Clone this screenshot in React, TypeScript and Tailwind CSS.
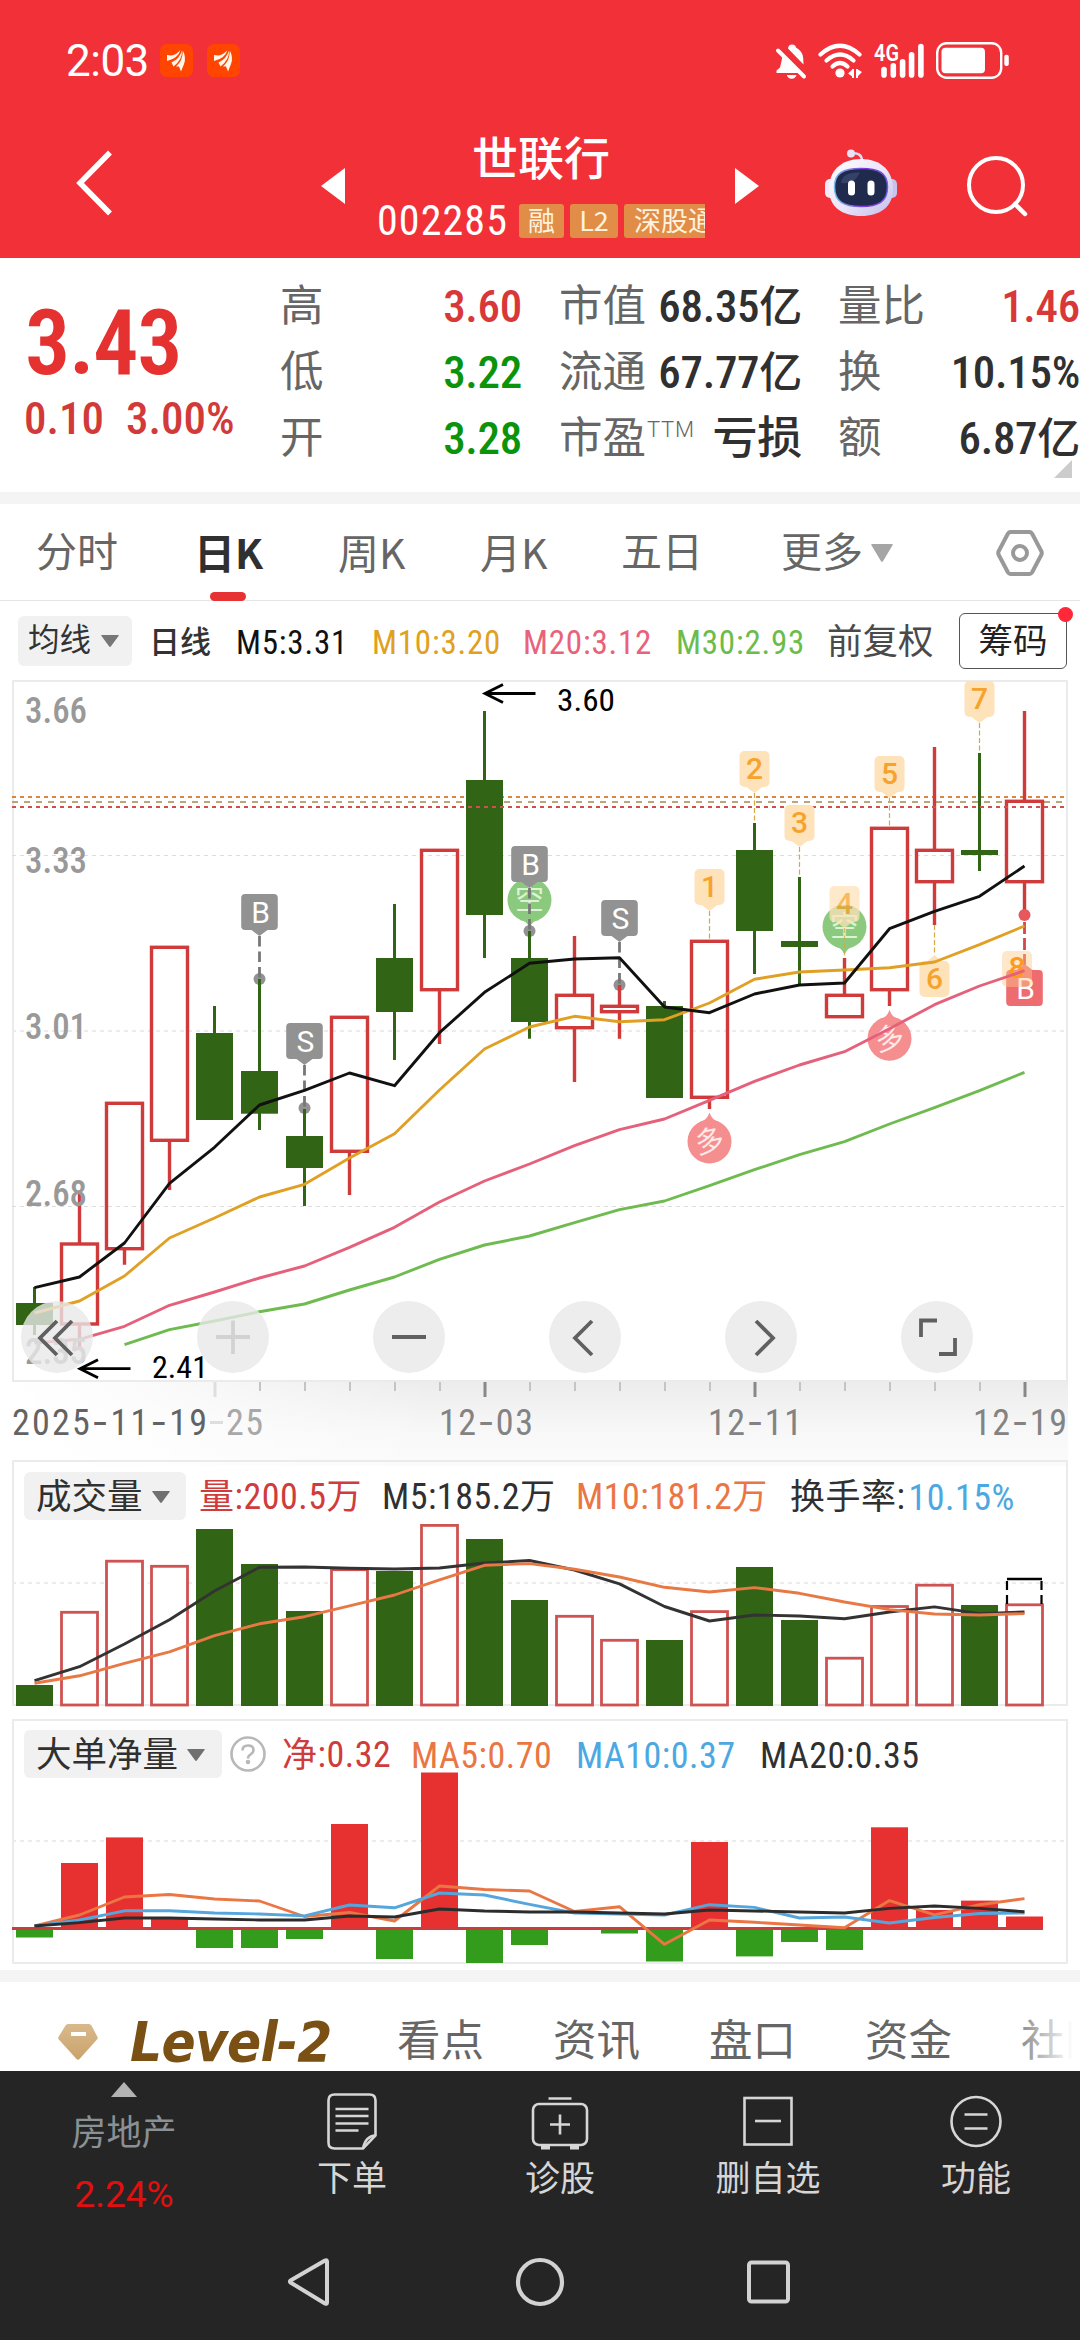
import clsx from "clsx";
import type { ReactNode } from "react";

type Candle = {
    up: boolean;
    open: number;
    close: number;
    high: number;
    low: number;
};

const STEP = 45;
const FIRST_X = 34.5;
const cx = (i: number) => FIRST_X + i * STEP;
const toPoints = (ys: number[], from = 0) => ys.map((y, i) => `${cx(i + from)},${y}`).join(" ");

// [rising, wick top, body top, body bottom, wick bottom]
const candles: Candle[] = (
    [
        [0, 1287, 1303, 1325, 1335],
        [1, 1190.7, 1244, 1324, 1347.7],
        [1, 1103, 1103.3, 1248.7, 1264.7],
        [1, 947, 947.3, 1140.3, 1190],
        [0, 1006, 1033, 1120, 1120],
        [0, 979, 1071, 1113.7, 1130],
        [0, 1109, 1136, 1168, 1206],
        [1, 1017, 1017.3, 1151.3, 1195],
        [0, 904, 958, 1012, 1060],
        [1, 850, 850.3, 989.7, 1044],
        [0, 711, 780, 915, 958],
        [0, 931, 958, 1022, 1038.7],
        [1, 936, 995.3, 1027.7, 1082],
        [1, 985, 1006.3, 1011.7, 1038.7],
        [0, 1001, 1006, 1098, 1098],
        [1, 941, 941.3, 1097.3, 1109],
        [0, 823, 850, 931, 974],
        [0, 877, 941, 947, 984],
        [1, 958, 995.3, 1016.7, 1016.7],
        [1, 828, 828.3, 989.7, 1006],
        [1, 747, 850.3, 881.7, 925],
        [0, 753, 850, 855, 871],
        [1, 711, 801.3, 881.7, 915],
    ] as number[][]
).map(([up, high, open, close, low]) => ({ up: up === 1, high, open, close, low }));

const ma5 = [1287.7, 1277, 1243, 1183.3, 1147.3, 1105, 1090.3, 1073, 1085.7, 1032.7, 992.3, 963.3, 959, 957.7, 1007, 1012.7, 994, 985, 983, 928.7, 911.3, 896.3, 866];
const ma10 = [1313, 1301, 1276, 1238, 1218, 1197, 1184.3, 1158, 1133.7, 1090, 1049, 1027, 1016.3, 1021.7, 1019.7, 1003, 979.3, 972, 970, 967.7, 962, 944.7, 926];
const ma20 = [1343, 1339.3, 1326.3, 1305.3, 1292, 1278, 1266, 1247.3, 1227.3, 1202, 1181, 1164, 1145.7, 1129.7, 1119, 1100.3, 1081.3, 1065, 1051.7, 1028.7, 1004.7, 986, 970.7];
const ma30 = [1344.7, 1329.7, 1321, 1311.7, 1304, 1290, 1277, 1259.3, 1245, 1236, 1222.7, 1209.7, 1201, 1185.7, 1169.7, 1154.7, 1141.7, 1124, 1107.7, 1090.7, 1072.3];

const volumes = [1685, 1612.3, 1561.2, 1566.3, 1529, 1564, 1611, 1569.7, 1571, 1525.4, 1539, 1600, 1616.3, 1640.3, 1640, 1611.6, 1567, 1620, 1658.2, 1606.5, 1585.2, 1605, 1604.8];
const volM5 = [1680.6, 1666.7, 1644, 1619.7, 1591, 1567.3, 1567, 1568.3, 1569, 1568, 1563, 1560.5, 1570, 1583.9, 1606.5, 1621, 1615, 1616, 1618.7, 1612, 1606.9, 1613.6, 1612];
const volM10 = [1683.3, 1675.8, 1663.3, 1651.8, 1635.6, 1623.8, 1616.7, 1605.8, 1595, 1579.8, 1565.3, 1563.6, 1569.3, 1577, 1587.3, 1592, 1587.6, 1593.3, 1602, 1609.6, 1614, 1615, 1613.6];

const NET_ZERO = 1928.5;
const netBars = [1937.5, 1863, 1837.4, 1919, 1948, 1948, 1939, 1824, 1959, 1772.5, 1963, 1945, NET_ZERO, 1933.5, 1961.5, 1842, 1956.4, 1942, 1950, 1827.3, 1910, 1900.6, 1916.5];
const netM5 = [1926, 1915, 1897, 1894.5, 1899, 1901, 1916.5, 1912.5, 1921, 1886, 1889.5, 1891, 1911.5, 1906.7, 1944.3, 1920, 1922.3, 1925, 1927.7, 1900.6, 1914.8, 1904.7, 1898.6];
const netM10 = [1926, 1920, 1910.8, 1910.8, 1913, 1914, 1915.9, 1905, 1907.8, 1893, 1895, 1904.4, 1913, 1914, 1915, 1904.7, 1907.4, 1918, 1917, 1923, 1917.5, 1913.5, 1913];
const netM20 = [1926, 1922.6, 1918, 1918, 1919, 1920, 1920, 1916, 1917, 1909, 1911, 1912, 1912, 1913, 1914, 1910, 1911, 1912, 1913, 1908.4, 1906, 1908.4, 1911.8];

function StatusBar() {
    return (
        <div className="flex h-[120px] items-start pt-[41px] text-white">
            <span className="ml-[66px] w-[94px] font-[Roboto] text-[44px] leading-[40px] tracking-[-0.5px]">2:03</span>
            <AppBadge />
            <div className="w-[14px]" />
            <AppBadge />
            <svg className="ml-[535px] h-10 w-[236px]" viewBox="775 40 236 40" fill="currentColor">
                {/* Muted bell */}
                <path d="M788 47.5Q788.5 43.5 792 43.5Q795.500 43.500 796 46.500Q802.500 50 803.200 57L803.500 63.500Z" />
                <path d="M782.500 54L800 72H776.500V69.500L780 66.500Q781.800 60 782.500 54ZM786.800 74H796.500Q795.500 77.700 791.700 77.700Q787.800 77.700 786.800 74Z" />
                <path d="M778 49.500L804 75.500" stroke="currentColor" strokeWidth="4" strokeLinecap="round" />
                {/* Wi-Fi */}
                <g fill="none" stroke="currentColor" strokeWidth="4.200" strokeLinecap="round">
                    <path d="M820.500 53.500Q840 36 859.500 53.500" />
                    <path d="M826.500 59.500Q840 47.500 853.500 59.500" />
                    <path d="M832.500 65.500Q840 58.500 847.500 65.500" />
                </g>
                <circle cx="840" cy="72" r="4.600" />
                <path d="M853 68V76L848 72.500ZM857 68V76L862 71Z" />
                <rect x="852" y="68" width="2" height="9" />
                <rect x="856" y="68" width="2" height="9" />
                {/* Signal */}
                <text x="874" y="60" className="font-[Roboto] text-[23px] font-semibold" textLength="25" lengthAdjust="spacingAndGlyphs">4G</text>
                <rect x="881.200" y="65.700" width="5.600" height="11" rx="2.800" />
                <rect x="890.500" y="62" width="5.600" height="14.700" rx="2.800" />
                <rect x="899.800" y="58" width="5.600" height="18.700" rx="2.800" />
                <rect x="908.800" y="51" width="5.600" height="25.700" rx="2.800" />
                <rect x="918.100" y="42.700" width="5.600" height="34" rx="2.800" />
                {/* Battery */}
                <rect x="937.200" y="42.200" width="64" height="34.600" rx="9.500" fill="none" stroke="currentColor" strokeWidth="2.400" />
                <rect x="941.500" y="46.700" width="43.500" height="25.500" rx="4" />
                <rect x="1004.300" y="53.700" width="4.500" height="11.300" rx="2" />
            </svg>
        </div>
    );
}

function AppBadge() {
    return (
        <svg className="mt-[3px] h-[33px] w-[33px]" viewBox="0 0 33 33">
            <rect width="33" height="33" rx="7" fill="#ff4500" />
            <g fill="#fff7ea">
                <path d="M7 11L11 11.500Q16 11 20.500 6Q18 14.500 7 17Z" />
                <path d="M11.500 18.500Q19.500 15 22 6.500Q22.500 15.500 13.500 22.500Z" />
                <path d="M16 22.500Q23 16.500 22.800 6.500Q26.500 13.500 24 20L21 27.500L19 22.500Z" />
            </g>
        </svg>
    );
}

function RobotIcon() {
    return (
        <svg className="h-[68px] w-[74px]" viewBox="0 0 74 68">
            <defs>
                <linearGradient id="shell" x1="0" y1="0" x2="1" y2="1">
                    <stop offset="0" stopColor="#ffffff" />
                    <stop offset="0.55" stopColor="#e9e4f7" />
                    <stop offset="1" stopColor="#c3bcec" />
                </linearGradient>
                <linearGradient id="rim" x1="0" y1="0" x2="1" y2="0">
                    <stop offset="0" stopColor="#79b8e8" />
                    <stop offset="0.6" stopColor="#7a35d8" />
                    <stop offset="1" stopColor="#6d5be0" />
                </linearGradient>
            </defs>
            <path d="M27 4.500Q38 3 38 12" fill="none" stroke="#dfdaf2" strokeWidth="2.500" />
            <circle cx="27" cy="4.500" r="4" fill="#e8e2f5" />
            <rect x="1" y="30" width="10" height="19" rx="5" fill="#eeeafa" />
            <rect x="63" y="30" width="10" height="19" rx="5" fill="#c9c2ee" />
            <path d="M37 10C57 10 69 22 69 40C69 58 56 67 37 67C18 67 5 58 5 40C5 22 17 10 37 10Z" fill="url(#shell)" />
            <path d="M37 19.500C55 19.500 63.500 24 63.500 38C63.500 53 54 57.500 37 57.500C20 57.500 10.500 53 10.500 38C10.500 24 19 19.500 37 19.500Z" fill="#1f2a4d" stroke="url(#rim)" strokeWidth="1.500" />
            <path d="M17 34C18 26 24 23.500 36 23.500C32 32 26 35 17 34Z" fill="#46527a" opacity="0.6" />
            <rect x="24" y="31.500" width="7" height="15" rx="3.500" fill="#fff" />
            <rect x="43.500" y="31.500" width="7" height="15" rx="3.500" fill="#fff" />
        </svg>
    );
}

function StockHeader() {
    return (
        <div className="flex h-[132px] items-center text-white">
            <svg className="-mt-1.5 ml-[76px] h-[70px] w-[38px] shrink-0" viewBox="0 0 38 70" fill="none" stroke="currentColor" strokeWidth="5.500">
                <path d="M34 4.500L4 35L34 65.500" />
            </svg>
            <svg className="ml-[207px] h-9 w-6 shrink-0" viewBox="0 0 24 36" fill="currentColor">
                <path d="M0 18L24 0V36Z" />
            </svg>
            <div className="ml-8 flex w-[328px] shrink-0 flex-col gap-5">
                <div className="text-center text-[46px] leading-[50px] font-medium">世联行</div>
                <div className="flex h-[34px] items-center gap-1.5 overflow-hidden whitespace-nowrap">
                    <span className="mr-[7px] w-[129px] text-[42px] leading-[34px] font-[450] tracking-[1.1px]">002285</span>
                    <Tag className="w-[45px]">融</Tag>
                    <Tag className="w-[48px]">L2</Tag>
                    <Tag className="pl-2.5">深股通</Tag>
                </div>
            </div>
            <svg className="ml-[30px] h-9 w-6 shrink-0" viewBox="0 0 24 36" fill="currentColor">
                <path d="M24 18L0 0V36Z" />
            </svg>
            <div className="-mt-1.5 ml-[65px]">
                <RobotIcon />
            </div>
            <svg className="ml-[67px] h-16 w-16 shrink-0" viewBox="0 0 64 64" fill="none" stroke="currentColor" strokeWidth="4">
                <circle cx="31" cy="31" r="27" />
                <path d="M50 50L60 60" strokeWidth="4.500" strokeLinecap="round" />
            </svg>
        </div>
    );
}

function Tag({ children, className }: { children: ReactNode; className?: string }) {
    return (
        <span className={clsx("flex h-[34px] shrink-0 items-center justify-center rounded-[3px] bg-[#e18d48] pb-[3px] font-[Noto_Sans_CJK_SC] text-[27px] leading-[31px] text-[#fff3df]", className)}>
            {children}
        </span>
    );
}

function Stat({ label, sup, value, tone }: { label: string; sup?: string; value: string; tone?: "up" | "down" }) {
    return (
        <div className="flex h-[66px] items-center justify-between text-[43.5px] leading-[66px] whitespace-nowrap">
            <span className="flex text-[#666]">
                {label}
                {sup && <span className="ml-px font-[Roboto] text-[22px] leading-[48px] font-light tracking-[0.8px]">{sup}</span>}
            </span>
            <span
                className={clsx(
                    "text-[45px] font-medium tracking-[-0.3px]",
                    tone === "up" && "text-[#d83838]",
                    tone === "down" && "text-[#0b940b]",
                    !tone && "text-[#303030]",
                )}
            >
                {value.replace("亿", "")}
                {value.endsWith("亿") && <span className="text-[43px]">亿</span>}
            </span>
        </div>
    );
}

function Quote() {
    return (
        <section className="relative flex h-[234px] pt-4">
            <div className="w-[280px] text-[#e63131]">
                <div className="mt-[27px] ml-[25px] text-[90px] leading-[86px] font-semibold tracking-[-1.3px]">3.43</div>
                <div className="mt-[4px] ml-6 flex gap-[22px] text-[45px] leading-[56px] font-medium text-[#d23a3a]">
                    <span>0.10</span>
                    <span>3.00%</span>
                </div>
            </div>
            <div className="w-[242px]">
                <Stat label="高" value="3.60" tone="up" />
                <Stat label="低" value="3.22" tone="down" />
                <Stat label="开" value="3.28" tone="down" />
            </div>
            <div className="ml-[37px] w-[243px]">
                <Stat label="市值" value="68.35亿" />
                <Stat label="流通" value="67.77亿" />
                <Stat label="市盈" sup="TTM" value="亏损" />
            </div>
            <div className="ml-[36px] w-[242px]">
                <Stat label="量比" value="1.46" tone="up" />
                <Stat label="换" value="10.15%" />
                <Stat label="额" value="6.87亿" />
            </div>
            <svg className="absolute top-[202px] right-2 h-[18px] w-[18px]" viewBox="0 0 18 18" fill="#ccc">
                <path d="M18 0V18H0Z" />
            </svg>
        </section>
    );
}

function Caret({ className }: { className?: string }) {
    return (
        <svg className={clsx("shrink-0", className)} viewBox="0 0 18 12" preserveAspectRatio="none" fill="currentColor">
            <path d="M0.500 0H17.500Q18 0.500 17.500 1L9.800 11.500Q9 12.300 8.200 11.500L0.500 1Q0 0.500 0.500 0Z" />
        </svg>
    );
}

function PeriodTabs() {
    return (
        <nav className="flex h-[97px] items-center border-b border-[#e5e5e5] pt-0.5 text-[41px] leading-[60px] text-[#666]">
            <span className="ml-[36px] w-[158px] shrink-0">分时</span>
            <span className="relative -mt-[5px] w-[144px] shrink-0 font-[Noto_Sans_CJK_SC] font-bold text-[#303030]">
                日K
                <i className="absolute top-[71px] left-4 h-[9px] w-9 rounded-full bg-[#e63232]" />
            </span>
            <span className="-mt-[5px] w-[142px] shrink-0 font-[Noto_Sans_CJK_SC]">周K</span>
            <span className="-mt-[5px] w-[141px] shrink-0 font-[Noto_Sans_CJK_SC]">月K</span>
            <span className="w-[160px] shrink-0">五日</span>
            <span className="flex w-[215px] shrink-0 items-center">
                更多
                <Caret className="ml-2 h-[18px] w-[22px] text-[#a5a5a5]" />
            </span>
            <svg className="h-12 w-12 shrink-0" viewBox="0 0 48 48" fill="none" stroke="#999" strokeWidth="4" strokeLinejoin="round">
                <path d="M14.500 3H33.500Q35 3 36 4.500L45.500 22.500Q46 24 45.500 25.500L36 43.500Q35 45 33.500 45H14.500Q13 45 12 43.500L2.500 25.500Q2 24 2.500 22.500L12 4.500Q13 3 14.500 3Z" />
                <circle cx="24" cy="24" r="7" />
            </svg>
        </nav>
    );
}

function MaLegend() {
    return (
        <div className="flex h-[79px] items-center text-[33px] leading-[46px] font-[450] tracking-[0.8px] whitespace-nowrap">
            <span className="ml-[18px] flex h-[50px] w-[114px] shrink-0 items-center rounded-md bg-[#f1f1f1] pl-2.5 text-[31.5px] font-normal tracking-normal text-[#333]">
                均线
                <Caret className="ml-2.5 h-3 w-[18px] text-[#777]" />
            </span>
            <span className="ml-[17px] w-[87px] shrink-0 pt-[5px] text-[31px] tracking-normal text-[#333]">日线</span>
            <span className="w-[136px] shrink-0 pt-1 text-[#111]">M5:3.31</span>
            <span className="w-[151px] shrink-0 pt-1 text-[#e0a020]">M10:3.20</span>
            <span className="w-[153px] shrink-0 pt-1 text-[#e8637a]">M20:3.12</span>
            <span className="w-[151px] shrink-0 pt-1 text-[#6cbc4c]">M30:2.93</span>
            <span className="w-[132px] shrink-0 pt-[3px] text-[35.5px] font-normal tracking-normal text-[#4a4a4a]">前复权</span>
            <span className="relative flex h-[56px] w-[108px] shrink-0 items-center justify-center rounded-[6px] border border-[#555] text-[34.5px] font-normal tracking-normal text-[#222]">
                筹码
                <i className="absolute -top-[7px] -right-[7px] h-[15px] w-[15px] rounded-full bg-[#ff2838]" />
            </span>
        </div>
    );
}

function GridLine({ y, thin }: { y: number; thin?: boolean }) {
    return <line x1="12" x2="1066" y1={y} y2={y} stroke={thin ? "#dcdcdc" : "#ececec"} strokeWidth={thin ? 1 : 2} strokeDasharray="4 4" />;
}

function TradeFlag({ i, y, dotY, letter }: { i: number; y: number; dotY: number; letter: string }) {
    const x = cx(i);
    return (
        <g>
            <line x1={x} x2={x} y1={y + 42} y2={dotY} stroke="#777" strokeWidth="2.800" strokeDasharray="10.500 5" />
            <rect x={x - 18.3} y={y} width="36.600" height="36" rx="4" fill="#929292" />
            <path d={`M${x - 8} ${y + 36}h16l-8 6z`} fill="#929292" />
            <text x={x + 1} y={y + 29} textAnchor="middle" fill="#fff" className="font-[Roboto] text-[30px]">{letter}</text>
        </g>
    );
}

function CountFlag({ i, y, toY, n, below, shift = 0 }: { i: number; y: number; toY: number; n: number; below?: boolean; shift?: number }) {
    const x = cx(i) + shift;
    return (
        <g>
            <line x1={cx(i)} x2={cx(i)} y1={below ? toY : y + 42} y2={below ? y - 6 : toY} stroke="#d6a844" strokeWidth="1.200" strokeDasharray="5 2.500" />
            <rect x={x - 15} y={y} width="30" height="36" rx="5" fill="#fee2ba" />
            <path d={below ? `M${x - 7} ${y}h14l-7 -6z` : `M${x - 8} ${y + 36}h16l-8 6z`} fill="#fee2ba" />
            <text x={x} y={y + 27.5} textAnchor="middle" fill="#f5a32c" className="font-[Roboto] text-[30px] font-medium">{n}</text>
        </g>
    );
}

function Balloon({ i, y, kind }: { i: number; y: number; kind: "long" | "short" }) {
    const x = cx(i);
    const long = kind === "long";
    const tip = long ? y - 29 : y + 28;
    const base = long ? y - 20 : y + 20;
    return (
        <g opacity="0.88">
            <circle cx={x} cy={y} r="22" fill={long ? "#f47f7f" : "#7cc26e"} />
            <path d={`M${x - 10} ${base}Q${x - 3} ${base} ${x} ${tip}Q${x + 3} ${base} ${x + 10} ${base}z`} fill={long ? "#f47f7f" : "#7cc26e"} />
            <text
                x={x}
                y={y + 10}
                textAnchor="middle"
                fill={long ? "#ffe6e6" : "#d8f3cf"}
                transform={long ? `rotate(-12 ${x} ${y})` : undefined}
                className="font-[Noto_Sans_CJK_SC] text-[29px]"
            >
                {long ? "多" : "空"}
            </text>
        </g>
    );
}

function PriceLabel({ y, children }: { y: number; children: string }) {
    return (
        <text x="25" y={y} fill="#999" textLength="62" lengthAdjust="spacingAndGlyphs" className="text-[37px] font-medium">
            {children}
        </text>
    );
}

function DateLabel({ x, width, value, color }: { x: number; width: number; value: string; color: string }) {
    return (
        <text x={x} y="1435" fill={color} textLength={width} className="text-[36px] font-[450]">
            {value.split("").map((c, i) => (
                <tspan key={i} className={c === "-" ? "font-[Inter] font-normal" : ""}>{c}</tspan>
            ))}
        </text>
    );
}

const chartButtons: { d: string; faded?: boolean }[] = [
    { d: "M36 20L19 37L36 54M51 20L34 37L51 54" },
    { d: "M19 36H53M36 19.500V53", faded: true },
    { d: "M19 36H53" },
    { d: "M43 20L26 37L43 54" },
    { d: "M31 20L48 37L31 54" },
    { d: "M20 36V19.500H36M38 53H54V37" },
];

function KLineChart() {
    return (
        <section className="relative h-[780px]">
            <svg className="absolute inset-0 h-[790px] w-[1080px]" viewBox="0 680 1080 790">
                <defs>
                    <linearGradient id="axisShade" x1="0" y1="0" x2="0" y2="1">
                        <stop offset="0" stopColor="#ececec" />
                        <stop offset="0.6" stopColor="#f8f8f8" />
                        <stop offset="1" stopColor="#fbfbfb" />
                    </linearGradient>
                    <linearGradient id="leftFade" x1="0" y1="0" x2="1" y2="0">
                        <stop offset="0" stopColor="#fff" />
                        <stop offset="0.25" stopColor="#fff" stopOpacity="0.85" />
                        <stop offset="1" stopColor="#fff" stopOpacity="0" />
                    </linearGradient>
                </defs>
                <rect x="12" y="1382" width="1056" height="84" fill="url(#axisShade)" />
                <rect x="12" y="1382" width="420" height="84" fill="url(#leftFade)" />
                <rect x="13" y="681" width="1054" height="700" fill="#fff" stroke="#ebebeb" strokeWidth="2" />
                <GridLine y={855.5} thin />
                <GridLine y={1031} />
                <GridLine y={1206.5} thin />
                <line x1="12" x2="1066" y1="797" y2="797" stroke="#d9863f" strokeWidth="2" strokeDasharray="4 4" />
                <line x1="12" x2="1066" y1="802" y2="802" stroke="#b8a878" strokeWidth="2" strokeDasharray="6 6" />

                {/* Dots sit under the wicks */}
                <circle cx={cx(5)} cy="979" r="6" fill="#929292" />
                <circle cx={cx(6)} cy="1108" r="6" fill="#929292" />
                <circle cx={cx(11)} cy="931" r="6" fill="#929292" />
                <circle cx={cx(13)} cy="985" r="6" fill="#929292" />

                {candles.map((c, i) => {
                    const x = cx(i);
                    if (!c.up) {
                        return (
                            <g key={i} fill="#316414">
                                <rect x={x - 1.5} y={c.high} width="3" height={c.low - c.high} />
                                <rect x={x - 18.5} y={c.open} width="37" height={c.close - c.open} />
                            </g>
                        );
                    }
                    return (
                        <g key={i} fill="none" stroke="#cf3b3b" strokeWidth="3.400">
                            <path d={`M${x} ${c.high}V${c.open}M${x} ${c.close}V${c.low}`} />
                            <rect x={x - 18} y={c.open} width="36" height={c.close - c.open} />
                        </g>
                    );
                })}
                <line x1="12" x2="1066" y1="807" y2="807" stroke="#cf5050" strokeWidth="2" strokeDasharray="4 4" />

                <Balloon i={11} y={900} kind="short" />
                <Balloon i={15} y={1141.5} kind="long" />
                <Balloon i={19} y={1038.7} kind="long" />

                <CountFlag i={15} y={869} toY={941} n={1} />
                <CountFlag i={16} y={751} toY={823} n={2} />
                <CountFlag i={17} y={805} toY={877} n={3} />
                <Balloon i={18} y={926.7} kind="short" />
                <g opacity="0.75">
                    <CountFlag i={18} y={886} toY={958} n={4} />
                </g>
                <CountFlag i={19} y={756} toY={828} n={5} />
                <CountFlag i={20} y={961} toY={925} n={6} below />
                <CountFlag i={21} y={681} toY={753} n={7} />

                <TradeFlag i={5} y={894} dotY={978} letter="B" />
                <TradeFlag i={6} y={1023} dotY={1107} letter="S" />
                <TradeFlag i={11} y={846} dotY={931} letter="B" />
                <TradeFlag i={13} y={900} dotY={984} letter="S" />

                {/* Latest buy */}
                <circle cx={cx(22)} cy="915" r="6" fill="#e8575c" />
                <line x1={cx(22)} x2={cx(22)} y1="922" y2="966" stroke="#d04848" strokeWidth="2.800" strokeDasharray="12 4" />
                <rect x={cx(22) - 18.3} y="970" width="36.600" height="36" rx="4" fill="#ee6b70" />
                <path d={`M${cx(22) - 8} 970h16l-8 -6z`} fill="#ee6b70" />
                <text x={cx(22) + 1} y="999" textAnchor="middle" fill="#fff" className="font-[Roboto] text-[30px]">B</text>
                <rect x="1002" y="951" width="30" height="36" rx="5" fill="#fdc98a" opacity="0.45" />
                <text x="1017" y="978" textAnchor="middle" fill="#ff9a1e" className="font-[Roboto] text-[30px] font-medium">8</text>

                <g fill="none" strokeWidth="2.900" strokeLinejoin="round">
                    <polyline points={toPoints(ma30, 2)} stroke="#6fbb50" />
                    <polyline points={toPoints(ma20)} stroke="#e5607a" />
                    <polyline points={toPoints(ma10)} stroke="#e0a024" />
                    <polyline points={toPoints(ma5)} stroke="#111" />
                </g>

                <PriceLabel y={723}>3.66</PriceLabel>
                <PriceLabel y={872.7}>3.33</PriceLabel>
                <PriceLabel y={1039}>3.01</PriceLabel>
                <PriceLabel y={1206}>2.68</PriceLabel>
                <PriceLabel y={1363.7}>2.35</PriceLabel>

                <g fill="none" stroke="#000" strokeWidth="2.800">
                    <path d="M535.500 693.500H485M503 684.500L485 693.500L503 702.500" />
                    <path d="M130.500 1368.700H80M98 1359.700L80 1368.700L98 1377.700" />
                </g>
                <text x="557" y="710.700" textLength="58" lengthAdjust="spacingAndGlyphs" className="text-[31px]">3.60</text>
                <text x="152" y="1377.500" textLength="56" lengthAdjust="spacingAndGlyphs" className="text-[31px]">2.41</text>

                {candles.map((_, i) => {
                    if (i < 4) return null;
                    const major = (i - 4) % 6 === 0;
                    return (
                        <line
                            key={i}
                            x1={cx(i) + 0.5}
                            x2={cx(i) + 0.5}
                            y1="1382"
                            y2={major ? 1397 : 1391}
                            stroke={i === 4 ? "#dedede" : major ? "#888" : "#c4c4c4"}
                            strokeWidth={major ? 3 : 2}
                        />
                    );
                })}
                <line x1="210" x2="223" y1="1422.500" y2="1422.500" stroke="#dedede" strokeWidth="3" />
                <DateLabel x={12} width={195} value="2025-11-19" color="#636363" />
                <DateLabel x={226} width={37} value="25" color="#a8a8a8" />
                <DateLabel x={439} width={94} value="12-03" color="#838383" />
                <DateLabel x={708} width={94} value="12-11" color="#838383" />
                <DateLabel x={973} width={94} value="12-19" color="#838383" />
            </svg>

            <div className="absolute top-[621px] left-[21px] flex gap-[104px]">
                {chartButtons.map((b) => (
                    <button key={b.d} type="button" className="h-[72px] w-[72px] rounded-full bg-[#e8e8e8]/80">
                        <svg viewBox="0 0 72 72" fill="none" stroke={b.faded ? "#d2d2d2" : "#606060"} strokeWidth="3.800">
                            <path d={b.d} />
                        </svg>
                    </button>
                ))}
            </div>
        </section>
    );
}

function IndicatorButton({ label, className }: { label: string; className: string }) {
    return (
        <span className={clsx("flex h-12 shrink-0 items-center rounded-md bg-[#f1f1f1] pt-0.5 pl-3 text-[35.5px] tracking-normal text-[#303030]", className)}>
            {label}
            <Caret className="ml-[9px] h-3 w-[18px] text-[#707070]" />
        </span>
    );
}

function Cjk({ children }: { children: string }) {
    return <span className="text-[35px] font-normal">{children}</span>;
}

function VolumePanel() {
    return (
        <section className="relative h-[246px] pt-3">
            <svg className="absolute inset-0 h-[248px] w-[1080px]" viewBox="0 1460 1080 248">
                <rect x="13" y="1461" width="1054" height="244" fill="none" stroke="#ebebeb" strokeWidth="2" />
                <GridLine y={1583} />
                {volumes.map((y, i) =>
                    candles[i].up ? (
                        <rect key={i} x={cx(i) - 18} y={y} width="36" height={1705 - y} fill="#fff" stroke="#cf5353" strokeWidth="2.800" />
                    ) : (
                        <rect key={i} x={cx(i) - 18.5} y={y} width="37" height={1706 - y} fill="#316414" />
                    ),
                )}
                <path d="M1007 1604V1581M1041.500 1604V1581" stroke="#000" strokeWidth="2.200" strokeDasharray="9 5" />
                <path d="M1007 1579H1042" stroke="#000" strokeWidth="2.400" />
                <g fill="none" strokeWidth="2.900" strokeLinejoin="round">
                    <polyline points={toPoints(volM5)} stroke="#333" />
                    <polyline points={toPoints(volM10)} stroke="#e87844" />
                </g>
            </svg>
            <div className="relative flex h-12 items-center pl-6 text-[36px] leading-12 font-[450] tracking-[0.5px] whitespace-nowrap">
                <IndicatorButton label="成交量" className="w-[162px] font-normal" />
                <span className="ml-[13px] w-[183px] shrink-0 pt-[3px] text-[#d03b3b]"><Cjk>量</Cjk>:200.5<Cjk>万</Cjk></span>
                <span className="w-[194px] shrink-0 pt-[3px] text-[#303030]">M5:185.2<Cjk>万</Cjk></span>
                <span className="w-[214px] shrink-0 pt-[3px] text-[#ea7644]">M10:181.2<Cjk>万</Cjk></span>
                <span className="shrink-0 pt-[3px] text-[#303030]"><Cjk>换手率</Cjk>:</span>
                <span className="ml-[3px] pt-[3px] text-[#4ba8e2]">10.15%</span>
            </div>
        </section>
    );
}

function NetFlowPanel() {
    return (
        <section className="relative mt-[13px] mb-1.5 h-[245px] pt-[11px]">
            <svg className="absolute inset-0 h-[245px] w-[1080px]" viewBox="0 1719 1080 245">
                <rect x="13" y="1720" width="1054" height="243" fill="none" stroke="#ebebeb" strokeWidth="2" />
                <GridLine y={1841} />
                {netBars.map((y, i) => {
                    const up = y < NET_ZERO;
                    return (
                        <rect
                            key={i}
                            x={cx(i) - 18.5}
                            y={up ? y : NET_ZERO}
                            width="37"
                            height={Math.abs(NET_ZERO - y)}
                            fill={up ? "#e73131" : "#339c1d"}
                        />
                    );
                })}
                <rect x="12" y="1927" width="1031" height="3" fill="#cb3c3c" />
                <g fill="none" strokeWidth="2.900" strokeLinejoin="round">
                    <polyline points={toPoints(netM5)} stroke="#ea7644" />
                    <polyline points={toPoints(netM10)} stroke="#55a6dc" />
                    <polyline points={toPoints(netM20)} stroke="#2c2c2c" />
                </g>
            </svg>
            <div className="relative flex h-12 items-center pl-6 text-[36px] leading-12 font-[450] tracking-[0.5px] whitespace-nowrap">
                <IndicatorButton label="大单净量" className="w-[198px] font-normal" />
                <svg className="mx-2 h-9 w-9 shrink-0" viewBox="0 0 36 36" fill="none" stroke="#b8b8b8" strokeWidth="2.600">
                    <circle cx="18" cy="18" r="16.500" />
                    <path d="M12.500 14.500Q12.500 9.500 18 9.500Q23.500 9.500 23.500 14Q23.500 16.500 20.500 18.500Q18 20 18 22.500" />
                    <circle cx="18" cy="26" r="1" fill="#b8b8b8" />
                </svg>
                <span className="ml-2 w-[129px] shrink-0 pt-[3px] text-[#d03b3b]"><Cjk>净</Cjk>:0.32</span>
                <span className="w-[165px] shrink-0 pt-[3px] text-[#ea7644]">MA5:0.70</span>
                <span className="w-[184px] shrink-0 pt-[3px] text-[#4ba8e2]">MA10:0.37</span>
                <span className="pt-[3px] text-[#303030]">MA20:0.35</span>
            </div>
        </section>
    );
}

function DetailTabs() {
    return (
        <nav className="relative flex h-[89px] items-center overflow-hidden pt-[31px] text-[43.5px] leading-[56px] whitespace-nowrap text-[#666]">
            <svg className="ml-[58px] h-9 w-10 shrink-0" viewBox="0 0 40 36">
                <defs>
                    <linearGradient id="gem" x1="0" y1="0" x2="0" y2="1">
                        <stop offset="0" stopColor="#d9b98c" />
                        <stop offset="1" stopColor="#c9a36c" />
                    </linearGradient>
                </defs>
                <path d="M7.500 1.500Q8.500 0 10 0H31Q32.500 0 33.500 1.500L39.500 13Q40 14.500 39 15.500L21.500 35Q20 36.500 18.500 35L0.800 15.500Q-0.200 14.500 0.500 13Z" fill="url(#gem)" />
                <rect x="13" y="8" width="15" height="4" fill="#fff" />
            </svg>
            <span className="ml-[32px] w-[267px] shrink-0 font-[DejaVu_Sans_Condensed] text-[56px] font-bold tracking-[-0.7px] text-[#7b5014] italic">Level-2</span>
            <span className="w-[156px] shrink-0">看点</span>
            <span className="w-[156px] shrink-0">资讯</span>
            <span className="w-[156px] shrink-0">盘口</span>
            <span className="w-[156px] shrink-0">资金</span>
            <span className="shrink-0">社区</span>
            <div className="absolute inset-y-0 right-0 w-[70px] bg-linear-to-r from-white/10 to-white to-90%" />
        </nav>
    );
}

function ToolItem({ label, children }: { label: string; children: ReactNode }) {
    return (
        <div className="flex w-[208px] flex-col items-center text-[35px] leading-[50px] text-[#d6d6d6]">
            <svg className="mt-[21px] h-[60px] w-[60px]" viewBox="0 0 60 60" fill="none" stroke="currentColor" strokeWidth="2.600">
                {children}
            </svg>
            <span className="mt-[3px]">{label}</span>
        </div>
    );
}

function BottomBar() {
    return (
        <footer className="h-[269px] bg-[#252525]">
            <div className="flex h-[153px]">
                <div className="flex w-[248px] flex-col items-center">
                    <svg className="mt-[11px] h-[15px] w-[26px]" viewBox="0 0 26 15" fill="#b3b3b3">
                        <path d="M13 0L26 15H0Z" />
                    </svg>
                    <span className="mt-[12px] text-[35px] leading-[50px] text-[#8a9094]">房地产</span>
                    <span className="mt-[11px] font-[Roboto] text-[37px] leading-[50px] text-[#e01010] font-stretch-90%">2.24%</span>
                </div>
                <ToolItem label="下单">
                    <path d="M12.500 2.500H47.500Q53.500 2.500 53.500 8.500V43.500L41 56.500H12.500Q6.500 56.500 6.500 50.500V8.500Q6.500 2.500 12.500 2.500Z" />
                    <path d="M53.500 43.500Q43.500 44 41 56.500M13.500 17H46.500M13.500 24H46.500M13.500 31.500H46.500M13.500 38.500H36.500" />
                </ToolItem>
                <ToolItem label="诊股">
                    <rect x="3" y="12" width="54" height="41" rx="6" />
                    <path d="M18.500 6.500H41.500M20 32.500H40M30 22.500V42.500" />
                    <path d="M11 55.500H20M40 55.500H49" strokeWidth="4" />
                </ToolItem>
                <ToolItem label="删自选">
                    <rect x="6.500" y="6" width="47" height="46.500" />
                    <path d="M17 29H43" />
                </ToolItem>
                <ToolItem label="功能">
                    <circle cx="30" cy="29.500" r="24.500" />
                    <path d="M18.500 22.500H41.500M18.500 36.500H41.500" />
                </ToolItem>
            </div>
            <div className="flex h-[116px] items-center pl-[286px] text-[#d2d2d2]">
                <svg className="h-[50px] w-[45px]" viewBox="0 0 45 50" fill="none" stroke="currentColor" strokeWidth="4" strokeLinejoin="round">
                    <path d="M4.500 25.500Q3.500 24.500 4.500 23.500L39 3.500Q41 2.500 41 4.500V45.500Q41 47.500 39 46.500Z" />
                </svg>
                <svg className="ml-[184px] h-[50px] w-[50px]" viewBox="0 0 50 50" fill="none" stroke="currentColor" strokeWidth="4.200">
                    <circle cx="25" cy="25" r="22" />
                </svg>
                <svg className="ml-[181px] h-[46px] w-[46px]" viewBox="0 0 46 46" fill="none" stroke="currentColor" strokeWidth="4">
                    <rect x="3" y="3.500" width="39" height="39" rx="2.500" />
                </svg>
            </div>
        </footer>
    );
}

export default function App() {
    return (
        <main className="h-[2340px] w-[1080px] overflow-hidden bg-white font-['Roboto_Condensed','Roboto','Noto_Sans_CJK_SC',sans-serif]">
            <header className="h-[258px] bg-[#f23038]">
                <StatusBar />
                <StockHeader />
            </header>
            <Quote />
            <div className="h-3 bg-[#f4f4f4]" />
            <PeriodTabs />
            <MaLegend />
            <KLineChart />
            <VolumePanel />
            <NetFlowPanel />
            <div className="h-3 bg-[#f4f4f4]" />
            <DetailTabs />
            <BottomBar />
        </main>
    );
}
